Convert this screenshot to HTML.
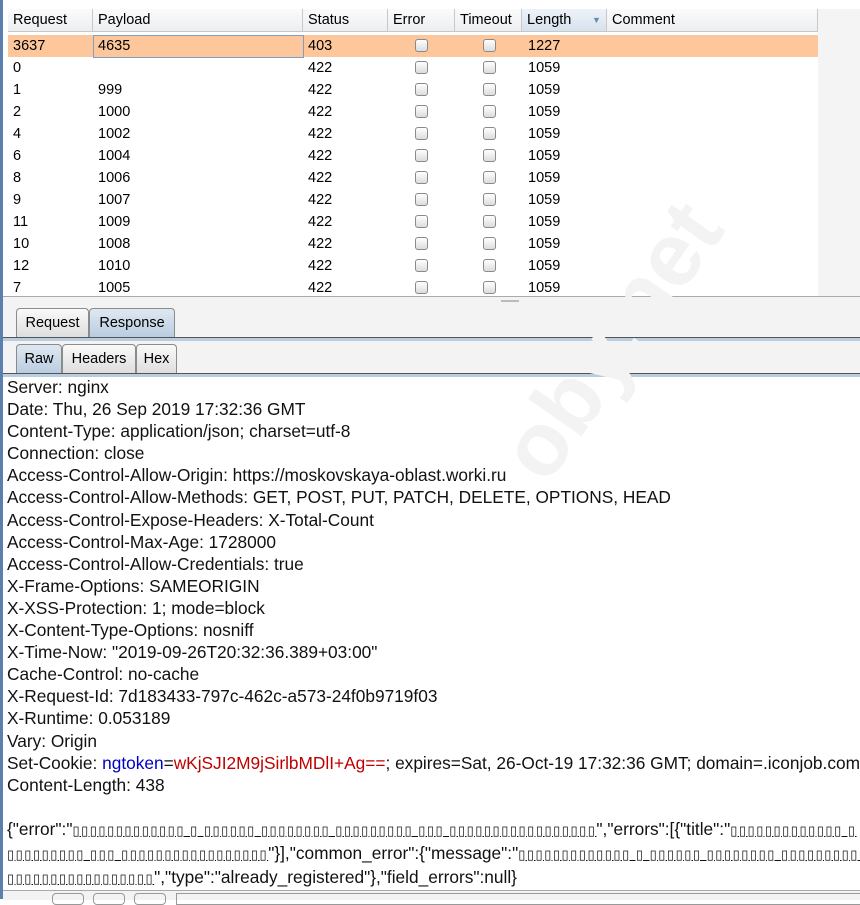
<!DOCTYPE html><html><head><style>
body{margin:0;width:860px;height:899px;background:#fff;position:relative;overflow:hidden;font-family:"Liberation Sans",Arial,sans-serif}
.a{position:absolute}
.hdr{top:9px;height:23px;background:linear-gradient(#fbfbfb,#eceef1);border-right:1px solid #c8c8c8;border-bottom:1px solid #c8c8c8;font-size:14.5px;line-height:23px;padding-left:5px;box-sizing:border-box;color:#000}
.row{left:8px;width:810px;height:22px;font-size:14.5px;line-height:22px}
.row span{position:absolute;top:0}
.cb{position:absolute;top:4px;width:13px;height:13px;border:1px solid #8a8a8a;border-radius:3px;background:linear-gradient(#fff,#dcdcdc);box-sizing:border-box}
.tab{height:29px;border:1px solid #8b8b8b;border-bottom:none;border-radius:4px 4px 0 0;background:linear-gradient(#fafafa,#dedede);font-size:14.5px;line-height:28px;text-align:center;box-sizing:border-box}
.sel{background:linear-gradient(#dfe8f1,#b9cde0)}
.txt{left:7px;font-size:17.3px;line-height:22.1px;color:#111;white-space:pre;letter-spacing:0}
.g{text-decoration:underline;letter-spacing:1.5px;font-size:13px}
</style></head><body>
<div class="a" style="left:0;top:0;width:3px;height:899px;background:#5b80b0"></div>
<div class="a" style="left:818px;top:9px;width:42px;height:290px;background:#f4f4f4"></div>
<div class="a hdr" style="left:8px;width:85px">Request</div>
<div class="a hdr" style="left:93px;width:210px">Payload</div>
<div class="a hdr" style="left:303px;width:85px">Status</div>
<div class="a hdr" style="left:388px;width:67px">Error</div>
<div class="a hdr" style="left:455px;width:67px">Timeout</div>
<div class="a hdr" style="left:522px;width:85px;background:linear-gradient(#eef3f8,#d6e2ee)">Length<span style="position:absolute;left:70px;color:#6a8ab0;font-size:9px">▼</span></div>
<div class="a hdr" style="left:607px;width:211px">Comment</div>
<div class="a row" style="top:35px;background:#fec79b"><div class="a" style="left:85px;top:0;width:209px;height:21px;border:1px solid #7d9fc4"></div><span style="left:5px">3637</span><span style="left:90px">4635</span><span style="left:300px">403</span><div class="cb" style="left:407px"></div><div class="cb" style="left:475px"></div><span style="left:520px">1227</span></div>
<div class="a row" style="top:57px"><span style="left:5px">0</span><span style="left:90px"></span><span style="left:300px">422</span><div class="cb" style="left:407px"></div><div class="cb" style="left:475px"></div><span style="left:520px">1059</span></div>
<div class="a row" style="top:79px"><span style="left:5px">1</span><span style="left:90px">999</span><span style="left:300px">422</span><div class="cb" style="left:407px"></div><div class="cb" style="left:475px"></div><span style="left:520px">1059</span></div>
<div class="a row" style="top:101px"><span style="left:5px">2</span><span style="left:90px">1000</span><span style="left:300px">422</span><div class="cb" style="left:407px"></div><div class="cb" style="left:475px"></div><span style="left:520px">1059</span></div>
<div class="a row" style="top:123px"><span style="left:5px">4</span><span style="left:90px">1002</span><span style="left:300px">422</span><div class="cb" style="left:407px"></div><div class="cb" style="left:475px"></div><span style="left:520px">1059</span></div>
<div class="a row" style="top:145px"><span style="left:5px">6</span><span style="left:90px">1004</span><span style="left:300px">422</span><div class="cb" style="left:407px"></div><div class="cb" style="left:475px"></div><span style="left:520px">1059</span></div>
<div class="a row" style="top:167px"><span style="left:5px">8</span><span style="left:90px">1006</span><span style="left:300px">422</span><div class="cb" style="left:407px"></div><div class="cb" style="left:475px"></div><span style="left:520px">1059</span></div>
<div class="a row" style="top:189px"><span style="left:5px">9</span><span style="left:90px">1007</span><span style="left:300px">422</span><div class="cb" style="left:407px"></div><div class="cb" style="left:475px"></div><span style="left:520px">1059</span></div>
<div class="a row" style="top:211px"><span style="left:5px">11</span><span style="left:90px">1009</span><span style="left:300px">422</span><div class="cb" style="left:407px"></div><div class="cb" style="left:475px"></div><span style="left:520px">1059</span></div>
<div class="a row" style="top:233px"><span style="left:5px">10</span><span style="left:90px">1008</span><span style="left:300px">422</span><div class="cb" style="left:407px"></div><div class="cb" style="left:475px"></div><span style="left:520px">1059</span></div>
<div class="a row" style="top:255px"><span style="left:5px">12</span><span style="left:90px">1010</span><span style="left:300px">422</span><div class="cb" style="left:407px"></div><div class="cb" style="left:475px"></div><span style="left:520px">1059</span></div>
<div class="a row" style="top:277px;height:19px;overflow:hidden"><span style="left:5px">7</span><span style="left:90px">1005</span><span style="left:300px">422</span><div class="cb" style="left:407px"></div><div class="cb" style="left:475px"></div><span style="left:520px">1059</span></div>
<div class="a" style="left:3px;top:296px;width:857px;height:81px;background:#f3f3f3;border-top:1px solid #aaa"></div>
<div class="a" style="left:501px;top:300px;width:18px;height:2px;background:#bbb"></div>
<div class="a tab" style="left:16px;top:308px;width:73px">Request</div>
<div class="a tab sel" style="left:89px;top:308px;width:86px">Response</div>
<div class="a" style="left:3px;top:337px;width:857px;height:3px;background:#b9cde0;border-top:1px solid #555"></div>
<div class="a tab sel" style="left:16px;top:344px;width:46px">Raw</div>
<div class="a tab" style="left:62px;top:344px;width:74px">Headers</div>
<div class="a tab" style="left:136px;top:344px;width:41px">Hex</div>
<div class="a" style="left:3px;top:373px;width:857px;height:3px;background:#b9cde0;border-top:1px solid #555"></div>
<div class="a" style="left:3px;top:377px;width:857px;height:515px;background:#fff"></div>
<div class="a" style="left:480px;top:440px;font-size:90px;font-weight:bold;color:#f3f3f3;transform:rotate(-55deg);transform-origin:left top;white-space:nowrap">oby.net</div>
<div class="a txt" style="top:376px">Server: nginx
Date: Thu, 26 Sep 2019 17:32:36 GMT
Content-Type: application/json; charset=utf-8
Connection: close
Access-Control-Allow-Origin: https://moskovskaya-oblast.worki.ru
Access-Control-Allow-Methods: GET, POST, PUT, PATCH, DELETE, OPTIONS, HEAD
Access-Control-Expose-Headers: X-Total-Count
Access-Control-Max-Age: 1728000
Access-Control-Allow-Credentials: true
X-Frame-Options: SAMEORIGIN
X-XSS-Protection: 1; mode=block
X-Content-Type-Options: nosniff
X-Time-Now: "2019-09-26T20:32:36.389+03:00"
Cache-Control: no-cache
X-Request-Id: 7d183433-797c-462c-a573-24f0b9719f03
X-Runtime: 0.053189
Vary: Origin
Set-Cookie: <span style="color:#0000c0">ngtoken</span>=<span style="color:#c00000">wKjSJI2M9jSirlbMDlI+Ag==</span>; expires=Sat, 26-Oct-19 17:32:36 GMT; domain=.iconjob.com
Content-Length: 438

{"error":"<span class="g">▯▯▯▯▯▯▯▯▯▯▯▯▯ ▯ ▯▯▯▯▯▯ ▯▯▯▯▯▯▯▯ ▯▯▯▯▯▯▯▯▯ ▯▯▯ ▯▯▯▯▯▯▯▯▯▯▯▯▯▯▯▯▯</span>","errors":[{"title":"<span class="g">▯▯▯▯▯▯▯▯▯▯▯▯▯ ▯</span>
<span class="g">▯▯▯▯▯▯▯▯▯ ▯▯▯ ▯▯▯▯▯▯▯▯▯▯▯▯▯▯▯▯▯</span>"}],"common_error":{"message":"<span class="g">▯▯▯▯▯▯▯▯▯▯▯▯▯ ▯ ▯▯▯▯▯▯ ▯▯▯▯▯▯▯▯ ▯▯▯▯▯▯▯▯▯ ▯▯</span>
<span class="g">▯▯▯▯▯▯▯▯▯▯▯▯▯▯▯▯▯</span>","type":"already_registered"},"field_errors":null}</div>
<div class="a" style="left:3px;top:890px;width:857px;height:9px;background:#f3f3f3;border-top:1px solid #aaa"></div>
<div class="a" style="left:52px;top:893px;width:30px;height:10px;border:1px solid #999;border-radius:4px"></div>
<div class="a" style="left:93px;top:893px;width:30px;height:10px;border:1px solid #999;border-radius:4px"></div>
<div class="a" style="left:134px;top:893px;width:30px;height:10px;border:1px solid #999;border-radius:4px"></div>
<div class="a" style="left:176px;top:893px;width:690px;height:10px;border:1px solid #999"></div>
</body></html>
